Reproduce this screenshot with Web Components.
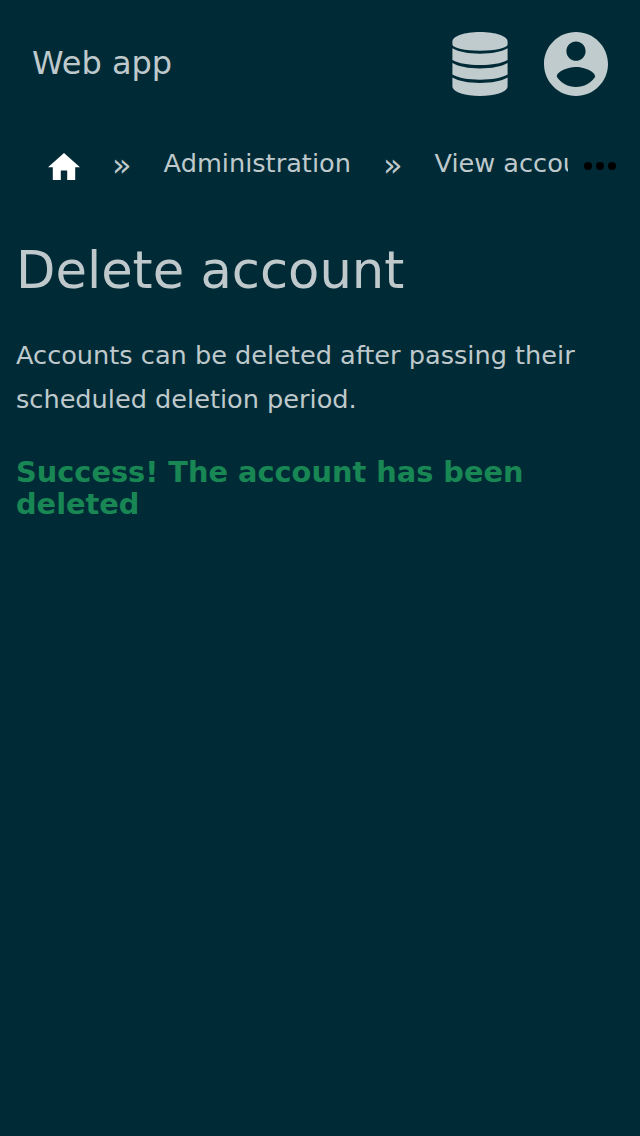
<!DOCTYPE html>
<html lang="en"><head><meta charset="utf-8"><title>Web app</title>
<style>body{margin:0;background:#002b36;color:#bfc9cc;font-family:"DejaVu Sans",sans-serif}</style></head>
<body><web-app></web-app>
<script>
class Base extends HTMLElement{constructor(){super();this.attachShadow({mode:'open'}).innerHTML=this.constructor.html}}
customElements.define('app-header',class extends Base{static html=`<style>
:host{display:flex;align-items:center;height:128px;padding:0 32px;box-sizing:border-box;font-size:32px}
.brand{flex:1;line-height:38px;padding-bottom:2px}svg{display:block;fill:#c0cbce}.db{margin-right:36px}
</style><div class="brand"><slot></slot></div>
<svg class="db" width="56" height="64" viewBox="0 0 56 64"><path d="M.4 9.5C.4 4.2 12 0 28 0s27.600 4.200 27.600 9.500v3.300C55 16 43 18.700 28 18.700S1 16 .4 12.800z"/><path d="M.4 16.300C7 20 16 21.700 28 21.700s21-1.700 27.600-5.400v11.700C49 31.600 40 33 28 33S7 31.600.4 28z"/><path d="M.4 31C7 34.700 16 36.400 28 36.400S49 34.700 55.600 31v11.600C49 46.300 40 47.700 28 47.700S7 46.300 .4 42.600z"/><path d="M.4 45.600C7 49.300 16 51 28 51s21-1.700 27.600-5.400v9.500C54 60.500 43 64 28 64S2 60.500.4 55.100z"/></svg>
<svg width="64" height="64" viewBox="2 2 20 20"><path d="M12 2C6.480 2 2 6.480 2 12s4.480 10 10 10 10-4.480 10-10S17.520 2 12 2zm0 3c1.660 0 3 1.340 3 3s-1.340 3-3 3-3-1.340-3-3 1.340-3 3-3zm0 14.200c-2.500 0-4.710-1.280-6-3.220.030-1.990 4-3.080 6-3.080 1.990 0 5.970 1.090 6 3.080-1.290 1.940-3.500 3.220-6 3.220z"/></svg>`});
customElements.define('app-breadcrumbs',class extends Base{static html=`<style>
:host{display:flex;height:70px;align-items:center;padding-left:48px;font-size:25.6px}
nav{display:flex;align-items:center;width:520px;overflow:hidden;white-space:nowrap}
svg{display:block;flex:none}.home{margin-top:6px}
.more{margin:6px 0 0 16px}
</style><nav><svg class="home" width="32" height="27" viewBox="2 3 20 17" preserveAspectRatio="none"><path fill="#fff" d="M10 20v-6h4v6h5v-8h3L12 3 2 12h3v8z"/></svg><slot></slot></nav><svg class="more" width="32" height="8"><circle cx="4" cy="4" r="4"/><circle cx="16" cy="4" r="4"/><circle cx="28" cy="4" r="4"/></svg>`});
customElements.define('crumb-separator',class extends Base{static html=`<style>:host{display:block;flex:none;width:19.6px;margin:3px 32px 0;font-size:32px;line-height:38px}</style>»`});
customElements.define('crumb-link',class extends Base{static html=`<style>:host{display:block;flex:none;line-height:30px}</style><slot></slot>`});
customElements.define('page-content',class extends Base{static html=`<style>:host{display:block;padding:0 16px}
h1{font-weight:400;font-size:51.2px;line-height:60px;margin:42px 0 0}
p{font-size:25.6px;line-height:44px;margin:33px 0 0}
strong{display:block;color:#198754;font-size:28.8px;line-height:32px;margin-top:35px}</style>
<h1>Delete account</h1><p>Accounts can be deleted after passing their scheduled deletion period.</p><strong>Success! The account has been deleted</strong>`});
customElements.define('web-app',class extends Base{static html=`<style>:host{display:block;min-height:1136px}</style><app-header>Web app</app-header><app-breadcrumbs><crumb-separator></crumb-separator><crumb-link>Administration</crumb-link><crumb-separator></crumb-separator><crumb-link>View account</crumb-link></app-breadcrumbs><page-content></page-content>`});
</script></body></html>
